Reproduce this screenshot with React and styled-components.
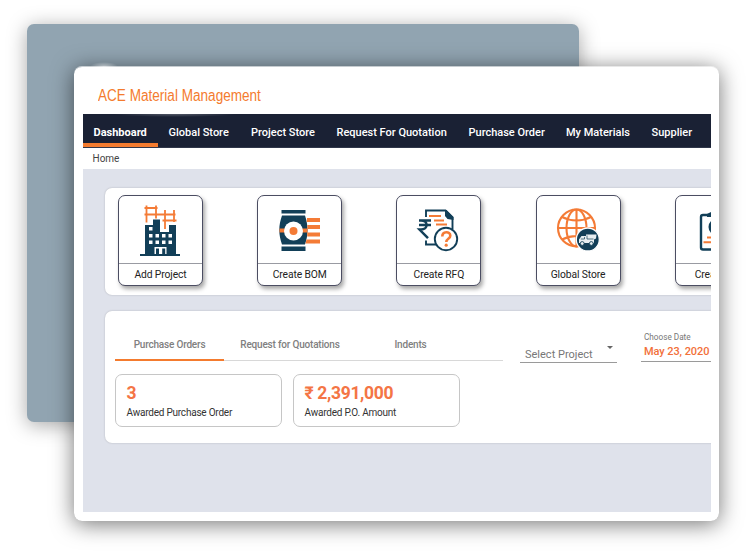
import React from "react";
import styled, { createGlobalStyle } from "styled-components";

const GlobalStyle = createGlobalStyle`
  * { box-sizing: border-box; }
  html, body { margin: 0; padding: 0; background: #fff; overflow: hidden; }
  body { font-family: Roboto, "Liberation Sans", sans-serif; }
`;

const Stage = styled.main`
  position: relative;
  width: 747px;
  height: 551px;
  overflow: hidden;
  background: #fff;
`;

const BackCard = styled.div`
  position: absolute;
  left: 27px;
  top: 24px;
  width: 552px;
  height: 397.5px;
  border-radius: 7px;
  background: #91a4b1;
  box-shadow: 0 3px 20px rgba(0, 0, 0, 0.35);
`;

const Glint = styled.div`
  position: absolute;
  left: 90px;
  top: 62px;
  width: 28px;
  height: 9px;
  background: radial-gradient(ellipse at center, rgba(255, 255, 255, 0.5), rgba(255, 255, 255, 0) 70%);
`;

const Window = styled.section`
  position: absolute;
  left: 74px;
  top: 66px;
  width: 645px;
  height: 454.5px;
  padding: 0 8px 8.5px 9px;
  border-radius: 8px;
  background: #fff;
  border-top: 1px solid rgba(255, 255, 255, 0.6);
  background-clip: padding-box;
  box-shadow: 0 3px 22px rgba(0, 0, 0, 0.55);
  display: flex;
  flex-direction: column;
`;

const Title = styled.h1`
  margin: 0;
  height: 47px;
  padding: 19px 0 0 15px;
  font: 400 16px/20px "Liberation Sans", Arial, sans-serif;
  color: #f47b2e;
  white-space: nowrap;
  transform: scaleX(0.848);
  transform-origin: 15px 0;
`;

const Nav = styled.nav`
  flex: 0 0 34px;
  display: flex;
  overflow: hidden;
  background: radial-gradient(ellipse 62px 3px at 92px 0, rgba(255, 255, 255, 0.25), transparent), #1a2134;
  border-bottom: 1px solid #30374a;
`;

const NavItem = styled.a`
  flex: 0 0 ${(p) => p.$w}px;
  height: 33px;
  padding-left: 10.5px;
  border-bottom: 4px solid ${(p) => (p.$active ? "#f47b2e" : "transparent")};
  font-size: 11px;
  line-height: 37px;
  font-weight: ${(p) => (p.$active ? 700 : 500)};
  color: #fff;
  white-space: nowrap;
`;

const Crumb = styled.div`
  flex: 0 0 21px;
  padding-left: 9.5px;
  font-size: 10px;
  line-height: 21px;
  color: #444;
`;

const Body = styled.div`
  flex: 1;
  overflow: hidden;
  padding: 19px 0 0 22px;
  display: flex;
  flex-direction: column;
  gap: 16px;
  background: #dfe2eb;
`;

const Panel = styled.div`
  flex: 0 0 ${(p) => p.$h}px;
  width: 700px;
  border-radius: 7px;
  background: #fff;
  box-shadow: 0 0 2px rgba(0, 0, 0, 0.22);
`;

const ActionRow = styled.div`
  display: flex;
  gap: 54.2px;
  padding: 7px 0 0 13px;
`;

const ActionCard = styled.button`
  flex: 0 0 85px;
  height: 91px;
  padding: 0;
  border: 1px solid #4b4d62;
  border-radius: 7px;
  background: #fff;
  box-shadow: 2px 3px 4px rgba(0, 0, 0, 0.35);
  display: flex;
  flex-direction: column;
  align-items: center;
  font-family: inherit;
`;

const IconArea = styled.div`
  width: 100%;
  height: 68px;
  border-bottom: 1px solid #999ba2;
  & > svg { display: block; width: 83px; height: 67px; }
`;

const ActionLabel = styled.span`
  font-size: 10.3px;
  line-height: 21px;
  color: #222;
  white-space: nowrap;
  letter-spacing: -0.1px;
`;

const FilterRow = styled.div`
  display: flex;
  height: 50px;
  padding-left: 10px;
`;

const Tabs = styled.div`
  flex: 0 0 388px;
  display: flex;
  height: 50px;
  border-bottom: 1px solid #d8d8d8;
`;

const Tab = styled.div`
  flex: 0 0 ${(p) => p.$w}px;
  height: 50px;
  padding-top: 27px;
  text-align: center;
  font-size: 10px;
  line-height: 14px;
  letter-spacing: -0.19px;
  font-weight: 500;
  color: #808080;
  white-space: nowrap;
  border-bottom: 2px solid ${(p) => (p.$active ? "#f47b2e" : "transparent")};
`;

const Select = styled.div`
  flex: 0 0 97px;
  height: 52px;
  margin-left: 17px;
  padding: 36px 4px 0 5px;
  display: flex;
  justify-content: space-between;
  border-bottom: 1px solid #9a9a9a;
  font-size: 11px;
  line-height: 15px;
  color: #777;
  white-space: nowrap;
`;

const Caret = styled.i`
  margin-top: -1px;
  width: 0;
  height: 0;
  border: 3px solid transparent;
  border-top-color: #666;
`;

const DateField = styled.div`
  flex: 0 0 90px;
  height: 51px;
  margin-left: 24px;
  padding: 21px 0 0 3px;
  border-bottom: 1px solid #9a9a9a;
  white-space: nowrap;
`;

const DateLabel = styled.div`
  font-size: 8.2px;
  line-height: 11px;
  color: #777;
`;

const DateValue = styled.div`
  font-size: 11px;
  line-height: 17px;
  font-weight: 500;
  letter-spacing: -0.08px;
  color: #f2703a;
`;

const StatRow = styled.div`
  display: flex;
  gap: 11px;
  padding: 13px 0 0 10px;
`;

const Stat = styled.div`
  flex: 0 0 167px;
  height: 53px;
  padding: 8px 0 0 10.5px;
  border: 1px solid #c6c6c6;
  border-radius: 7px;
`;

const StatValue = styled.div`
  font-size: 17.5px;
  line-height: 20px;
  font-weight: 700;
  letter-spacing: -0.35px;
  color: #f47545;
  white-space: nowrap;
`;

const StatLabel = styled.div`
  font-size: 10px;
  line-height: 20px;
  letter-spacing: -0.22px;
  color: #333;
  white-space: nowrap;
`;

const NAVY = "#123f58";
const ORANGE = "#f47b36";

const BuildingIcon = () => (
  <svg viewBox="0 0 83 67">
    <g stroke={ORANGE} strokeWidth="1.8" fill="none">
      <path d="M27.500 9.500v17M37 9.500v13M25.500 12h13M25.500 18.500h31M46 14v19M55 14v12M43.500 24.500h14" />
    </g>
    <path fill={NAVY} d="M26 29h8v-5.500h7V36h9v-7h7v29h4v2H21v-2h5z" />
    <path fill="#fff" d="M30 31h3.500v3.500H30zM30 38h3.500v3.500H30zM36.500 38H40v3.500h-3.500zM43 38h3.500v3.500H43zM49.500 38H53v3.500h-3.500zM30 44.500h3.500V48H30zM36.500 44.500H40V48h-3.500zM43 44.500h3.500V48H43zM49.500 44.500H53V48h-3.500zM35.500 51h12v7h-1.300v-5.500h-3V58H40v-5.500h-3V58h-1.500z" />
  </svg>
);

const BomIcon = () => (
  <svg viewBox="0 0 83 67">
    <path fill={NAVY} d="M23.500 14h24v3.500h-24zM24 19.500h23c1.500 5 2.500 9 2.500 14.500s-1 10-2.500 14.500H24c-1.700-5-2.700-9.500-2.700-14.500S22.300 24.500 24 19.500zM23.500 50.500h24V55h-24z" />
    <path fill={ORANGE} d="M21.500 32.500h28v4h-28zM49 22h13v4H48.700zM49.300 29H62v4H49.500zM49.300 36.500H62v4H49.200zM48.500 43.500H62v4H47.500z" />
    <circle cx="35.500" cy="35" r="9.500" fill="#fff" />
    <circle cx="35.500" cy="35" r="4" fill={ORANGE} />
  </svg>
);

const RfqIcon = () => (
  <svg viewBox="0 0 83 67">
    <path d="M29 21v-6.500h19.500l7 7V33M29 44.500v4h11" fill="none" stroke={NAVY} strokeWidth="1.900" />
    <path d="M48 14v6l2.500 3 6 1v-3l-7-7z" fill={NAVY} />
    <path d="M32 20h12M37 24.500h10M39 28.500h11" stroke={ORANGE} strokeWidth="1.900" />
    <path d="M22 24.500h12M22 29h12M24 24.500c7.500 0 7.500 9 0 9h-1.500l8.500 8.700" fill="none" stroke={NAVY} strokeWidth="2.500" />
    <circle cx="49" cy="43" r="11.200" fill="#fff" stroke={NAVY} strokeWidth="1.900" />
    <path d="M45.300 40.500c0-5.500 8-5.500 8-.8 0 3.200-4 3-4 6.300" fill="none" stroke={ORANGE} strokeWidth="2.600" />
    <circle cx="49.200" cy="49.200" r="1.600" fill={ORANGE} />
  </svg>
);

const GlobeIcon = () => (
  <svg viewBox="0 0 83 67">
    <g fill="none" stroke={ORANGE} strokeWidth="2.100">
      <circle cx="39.500" cy="32" r="18.500" />
      <ellipse cx="39.500" cy="32" rx="10" ry="18.500" />
      <path d="M39.500 13.500v37M21 32h37M25 21c9 4.500 20 4.500 29 0M25 43.500c9-4.500 20-4.500 29 0" />
    </g>
    <circle cx="50.800" cy="43.500" r="11.500" fill={NAVY} stroke="#fff" strokeWidth="1.300" />
    <path fill="#e7eef1" d="M42 43.500l2.500-3.500H49v-1.500h10.500l-.5 4-2 1V47H42z" />
    <path d="M50 39.500v3.500h6.500M43.800 43h3.700v-2" stroke={NAVY} strokeWidth=".7" fill="none" />
    <g fill="#e7eef1" stroke={NAVY} strokeWidth=".9">
      <circle cx="45.200" cy="47.500" r="1.900" /><circle cx="54.300" cy="47.500" r="1.900" />
    </g>
  </svg>
);

const ClipboardIcon = () => (
  <svg viewBox="0 0 83 67">
    <rect x="25" y="19" width="32" height="34.500" rx="2" fill="none" stroke={NAVY} strokeWidth="2.400" />
    <path fill={NAVY} d="M31 21v-3l4-2h12l4 2v3z" />
    <circle cx="41" cy="31" r="8.500" fill={NAVY} />
    <path d="M31 41.500h20M27.500 46.200h27" stroke={ORANGE} strokeWidth="1.900" />
  </svg>
);

const NAV = [
  { t: "Dashboard", w: 75, active: true },
  { t: "Global Store", w: 82.5 },
  { t: "Project Store", w: 85.5 },
  { t: "Request For Quotation", w: 132 },
  { t: "Purchase Order", w: 97.5 },
  { t: "My Materials", w: 85.5 },
  { t: "Supplier", w: 70 },
];

const ACTIONS = [
  { t: "Add Project", Icon: BuildingIcon },
  { t: "Create BOM", Icon: BomIcon },
  { t: "Create RFQ", Icon: RfqIcon },
  { t: "Global Store", Icon: GlobeIcon },
  { t: "Create PO", Icon: ClipboardIcon },
];

export default function App() {
  return (
    <>
      <GlobalStyle />
      <Stage>
        <BackCard />
        <Window>
          <Title>ACE Material Management</Title>
          <Nav>
            {NAV.map((n) => (
              <NavItem key={n.t} $w={n.w} $active={n.active}>{n.t}</NavItem>
            ))}
          </Nav>
          <Crumb>Home</Crumb>
          <Body>
            <Panel $h={107}>
              <ActionRow>
                {ACTIONS.map(({ t, Icon }) => (
                  <ActionCard key={t}>
                    <IconArea><Icon /></IconArea>
                    <ActionLabel>{t}</ActionLabel>
                  </ActionCard>
                ))}
              </ActionRow>
            </Panel>
            <Panel $h={131.5}>
              <FilterRow>
                <Tabs>
                  <Tab $w={109} $active>Purchase Orders</Tab>
                  <Tab $w={132}>Request for Quotations</Tab>
                  <Tab $w={109}>Indents</Tab>
                </Tabs>
                <Select>Select Project<Caret /></Select>
                <DateField>
                  <DateLabel>Choose Date</DateLabel>
                  <DateValue>May 23, 2020</DateValue>
                </DateField>
              </FilterRow>
              <StatRow>
                <Stat>
                  <StatValue>3</StatValue>
                  <StatLabel>Awarded Purchase Order</StatLabel>
                </Stat>
                <Stat>
                  <StatValue>₹ 2,391,000</StatValue>
                  <StatLabel>Awarded P.O. Amount</StatLabel>
                </Stat>
              </StatRow>
            </Panel>
          </Body>
        </Window>
        <Glint />
      </Stage>
    </>
  );
}
